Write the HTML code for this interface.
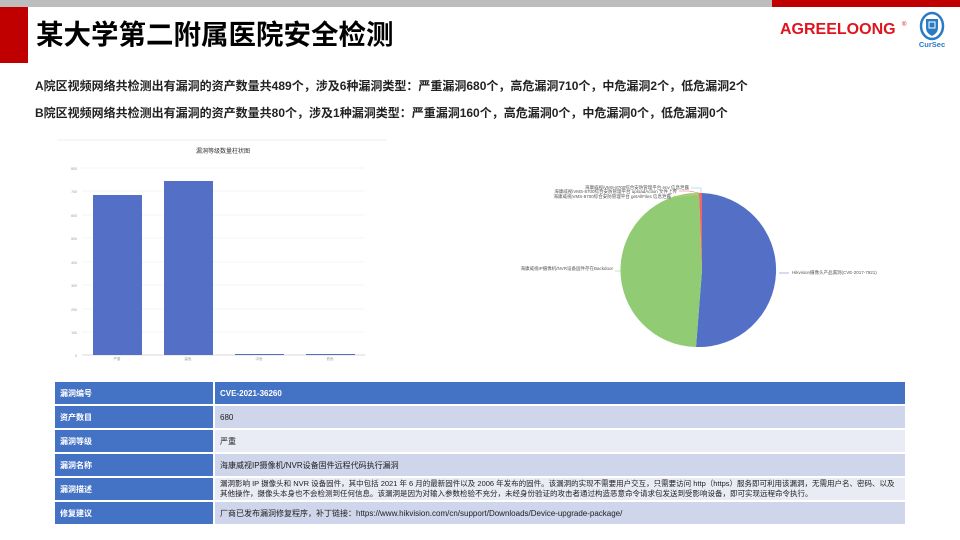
<!DOCTYPE html>
<html><head><meta charset="utf-8"><style>
*{margin:0;padding:0;box-sizing:border-box}
body{width:960px;height:540px;background:#fff;position:relative;overflow:hidden;font-family:"Liberation Sans","Noto Sans CJK SC",sans-serif}
.abs{position:absolute}
table{border-collapse:separate;border-spacing:0 2px}
td{font-size:8px;color:#222;padding:0 5px;border-left:2px solid #fff}
</style></head><body>
<div class="abs" style="left:0;top:0;width:772px;height:7px;background:#bdbdbd"></div>
<div class="abs" style="left:772px;top:0;width:188px;height:7px;background:#c00000"></div>
<div class="abs" style="left:0;top:7px;width:28px;height:56px;background:#c00000"></div>
<div class="abs" style="left:36px;top:18px;font-size:27.5px;font-weight:bold;color:#000;line-height:34px">某大学第二附属医院安全检测</div>
<div class="abs" style="left:780px;top:20px;font-size:16px;font-weight:bold;color:#e0141e;line-height:20px">AGREELOONG</div>
<div class="abs" style="left:902px;top:22px;font-size:6px;color:#e0141e">®</div>
<svg class="abs" style="left:917px;top:11px" width="30" height="38" viewBox="0 0 30 38">
<ellipse cx="15" cy="15" rx="11" ry="13" fill="none" stroke="#2b7bc4" stroke-width="2.5"/>
<path d="M9 8h12v9q0 5-6 8q-6-3-6-8z" fill="#2b7bc4"/><rect x="12" y="11" width="6" height="6" fill="none" stroke="#fff" stroke-width="1"/>
<text x="15" y="36" font-size="7.5" font-weight="bold" fill="#2b7bc4" text-anchor="middle" font-family="Liberation Sans">CurSec</text></svg>
<div class="abs" style="left:35px;top:77px;font-size:12px;font-weight:bold;color:#222">A院区视频网络共检测出有漏洞的资产数量共489个，涉及6种漏洞类型：严重漏洞680个，高危漏洞710个，中危漏洞2个，低危漏洞2个</div>
<div class="abs" style="left:35px;top:104px;font-size:12px;font-weight:bold;color:#222">B院区视频网络共检测出有漏洞的资产数量共80个，涉及1种漏洞类型：严重漏洞160个，高危漏洞0个，中危漏洞0个，低危漏洞0个</div>
<svg class="abs" style="left:55px;top:138px" width="335" height="225">
<line x1="2" y1="2" x2="332" y2="2" stroke="#eee"/>
<text x="168" y="15" font-size="6" text-anchor="middle" fill="#333">漏洞等级数量柱状图</text>
<g stroke="#eef0f6" stroke-width="0.7">
<line x1="27" y1="30" x2="310" y2="30"/><line x1="27" y1="53" x2="310" y2="53"/><line x1="27" y1="77" x2="310" y2="77"/><line x1="27" y1="100" x2="310" y2="100"/><line x1="27" y1="124" x2="310" y2="124"/><line x1="27" y1="147" x2="310" y2="147"/><line x1="27" y1="171" x2="310" y2="171"/><line x1="27" y1="194" x2="310" y2="194"/></g>
<line x1="27" y1="217" x2="310" y2="217" stroke="#ccc" stroke-width="0.7"/>
<g font-size="3.5" fill="#999" text-anchor="end"><text x="22" y="32">800</text><text x="22" y="55">700</text><text x="22" y="79">600</text><text x="22" y="102">500</text><text x="22" y="126">400</text><text x="22" y="149">300</text><text x="22" y="173">200</text><text x="22" y="196">100</text><text x="22" y="219">0</text></g>
<rect x="38" y="57" width="49" height="160" fill="#5470c6"/>
<rect x="109" y="43" width="49" height="174" fill="#5470c6"/>
<rect x="180" y="216" width="49" height="1" fill="#5470c6"/>
<rect x="251" y="216" width="49" height="1" fill="#5470c6"/>
<g font-size="3.5" fill="#999" text-anchor="middle"><text x="62" y="222">严重</text><text x="133" y="222">高危</text><text x="204" y="222">中危</text><text x="275" y="222">低危</text></g>
</svg>
<svg class="abs" style="left:500px;top:175px" width="400" height="185">
<path d="M202 95 L202 18 A77 77 0 1 1 196 172 Z" fill="#5470c6"/>
<path d="M202 95 L196 172 A77 77 0 0 1 199 18 Z" fill="#91cc75"/>
<path d="M202 95 L199 18 L202 18 Z" fill="#ee6666"/>
<g stroke-width="0.5" fill="none"><path d="M279 98 h10" stroke="#5470c6"/><path d="M125 96 h-10" stroke="#91cc75"/><path d="M201 18 v-5 h-10" stroke="#73c0de"/><path d="M199 18 l-10 -2 h-10" stroke="#ee6666"/><path d="M198 19 l-15 2 h-10" stroke="#fac858"/></g>
<g font-size="4.5" fill="#555"><text x="292" y="99">Hikvision摄像头产品漏洞(CVE-2017-7921)</text>
<text x="113" y="95" text-anchor="end">海康威视IP摄像机/NVR设备固件存在Backdoor</text>
<text x="189" y="14" text-anchor="end">海康威视iVMS-8700综合安防管理平台 env 信息泄露</text>
<text x="177" y="18" text-anchor="end">海康威视iVMS-8700综合安防管理平台 uploadAction 文件上传</text>
<text x="171" y="23" text-anchor="end">海康威视iVMS-8700综合安防管理平台 getAllFiles 信息泄露</text></g>
</svg>
<table class="abs" style="left:55px;top:380px;width:850px">
<tr style="height:22px"><td style="width:158px;background:#4472c4;color:#fff;font-weight:bold;border-left:0">漏洞编号</td><td style="background:#4472c4;color:#fff;font-weight:bold">CVE-2021-36260</td></tr>
<tr style="height:22px"><td style="background:#4472c4;color:#fff;font-weight:bold;border-left:0">资产数目</td><td style="background:#cfd5ea">680</td></tr>
<tr style="height:22px"><td style="background:#4472c4;color:#fff;font-weight:bold;border-left:0">漏洞等级</td><td style="background:#e9ebf5">严重</td></tr>
<tr style="height:22px"><td style="background:#4472c4;color:#fff;font-weight:bold;border-left:0">漏洞名称</td><td style="background:#cfd5ea">海康威视IP摄像机/NVR设备固件远程代码执行漏洞</td></tr>
<tr style="height:22px"><td style="background:#4472c4;color:#fff;font-weight:bold;border-left:0">漏洞描述</td><td style="background:#e9ebf5;font-size:7.5px;line-height:10px">漏洞影响 IP 摄像头和 NVR 设备固件，其中包括 2021 年 6 月的最新固件以及 2006 年发布的固件。该漏洞的实现不需要用户交互，只需要访问 http（https）服务即可利用该漏洞，无需用户名、密码、以及其他操作，摄像头本身也不会检测到任何信息。该漏洞是因为对输入参数检验不充分，未经身份验证的攻击者通过构造恶意命令请求包发送到受影响设备，即可实现远程命令执行。</td></tr>
<tr style="height:22px"><td style="background:#4472c4;color:#fff;font-weight:bold;border-left:0">修复建议</td><td style="background:#cfd5ea">厂商已发布漏洞修复程序，补丁链接：https://www.hikvision.com/cn/support/Downloads/Device-upgrade-package/</td></tr>
</table>
</body></html>
